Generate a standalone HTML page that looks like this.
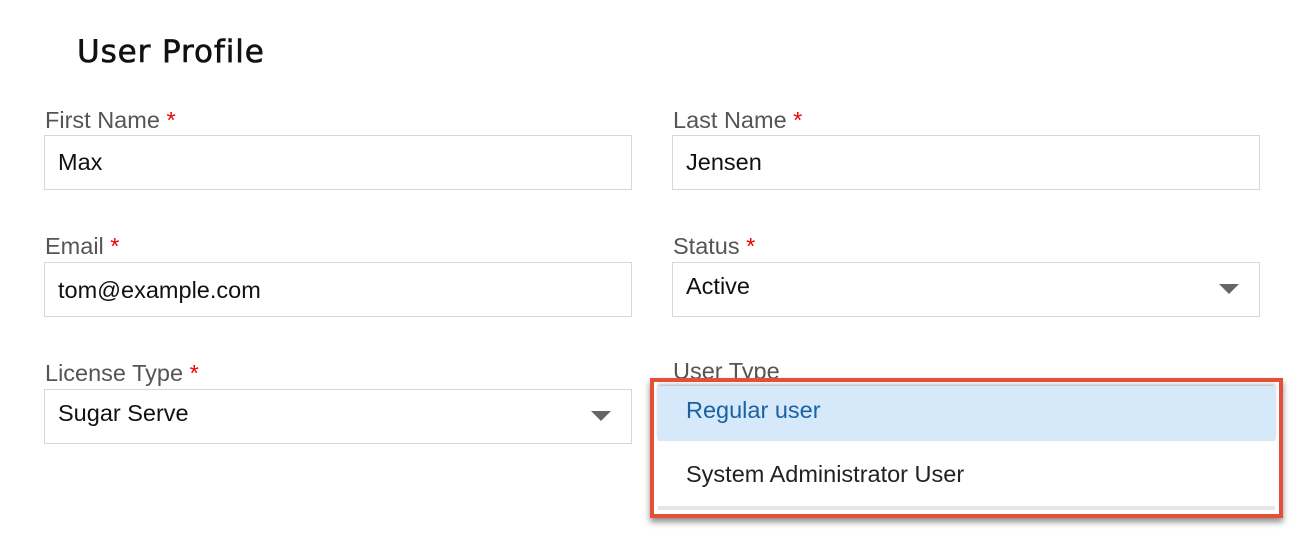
<!DOCTYPE html>
<html><head><style>
body{margin:0;width:1300px;height:538px;background:#fff;font-family:"Liberation Sans",Arial,sans-serif;position:relative;overflow:hidden}
.t{position:absolute;left:77px;top:34px;font-size:31px;color:#111;font-family:"DejaVu Sans","Liberation Sans",sans-serif;letter-spacing:0.9px;-webkit-text-stroke:0.6px #111}
.l{position:absolute;font-size:23.5px;color:#555}
.l b{color:#e00;font-weight:normal}
.i{position:absolute;width:588px;height:55px;border:1.5px solid #cfd9e2;box-sizing:border-box;font-size:23.5px;color:#111;padding-left:13px;line-height:53px}
.c{position:absolute;right:20px;top:21px;width:0;height:0;border-left:10px solid transparent;border-right:10px solid transparent;border-top:10px solid #666}
</style></head><body>
<div class="t">User Profile</div>
<div class="l" style="left:45px;top:107px">First Name <b>*</b></div>
<div class="l" style="left:673px;top:107px">Last Name <b>*</b></div>
<div class="i" style="left:44px;top:135px">Max</div>
<div class="i" style="left:672px;top:135px">Jensen</div>
<div class="l" style="left:45px;top:233px">Email <b>*</b></div>
<div class="l" style="left:673px;top:233px">Status <b>*</b></div>
<div class="i" style="left:44px;top:262px;line-height:55px">tom@example.com</div>
<div class="i" style="left:672px;top:262px;line-height:47px">Active<div class="c"></div></div>
<div class="l" style="left:45px;top:360px">License Type <b>*</b></div>
<div class="l" style="left:673px;top:358px">User Type</div>
<div class="i" style="left:44px;top:389px;line-height:47px">Sugar Serve<div class="c"></div></div>
<div style="position:absolute;left:650px;top:378px;width:633px;height:140px;box-sizing:border-box;border:4px solid #e2503a;background:#fff;box-shadow:0 4px 6px rgba(0,0,0,.45)">
<div style="position:absolute;left:4px;top:4px;right:4px;height:55px;background:#d5e9fb;box-shadow:0 -2px 3px rgba(0,0,0,.25)"></div>
<div style="position:absolute;left:32px;top:15px;font-size:23.5px;color:#1a62a3">Regular user</div>
<div style="position:absolute;left:32px;top:79px;font-size:23.5px;color:#222">System Administrator User</div>
<div style="position:absolute;left:4px;right:4px;top:124px;height:4px;background:#e6e6e6"></div>
</div>
</body></html>
